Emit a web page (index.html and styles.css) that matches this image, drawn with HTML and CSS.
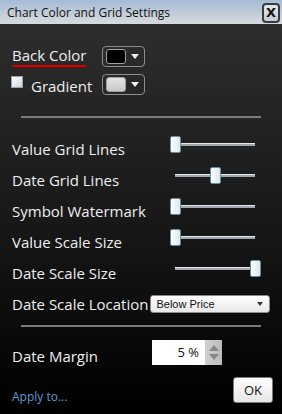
FILE: index.html
```html
<!DOCTYPE html>
<html lang="en">
<head>
  <meta charset="UTF-8">
  <meta name="viewport" content="width=device-width, initial-scale=1.0">
  <title>Chart Color and Grid Settings</title>
  <link rel="stylesheet" href="styles.css">
</head>
<body>

<div class="dialog">
  <div class="titlebar">
    <span class="title">Chart Color and Grid Settings</span>
    <button class="close-btn">X</button>
  </div>

  <div class="content">
    <div class="color-row">
      <span class="label"><span class="marked">Back Color</span></span>
      <div class="swatch-btn">
        <span class="swatch swatch-black"></span>
        <span class="caret"></span>
      </div>
    </div>
    <div class="color-row">
      <label class="label check-label"><span class="checkbox"></span>Gradient</label>
      <div class="swatch-btn">
        <span class="swatch swatch-grey"></span>
        <span class="caret"></span>
      </div>
    </div>

    <div class="divider divider-top"></div>

    <div class="setting-row">
      <span class="label">Value Grid Lines</span>
      <div class="slider"><div class="track"></div><div class="thumb" style="left: 0px;"></div></div>
    </div>
    <div class="setting-row">
      <span class="label">Date Grid Lines</span>
      <div class="slider"><div class="track"></div><div class="thumb" style="left: 40px;"></div></div>
    </div>
    <div class="setting-row">
      <span class="label">Symbol Watermark</span>
      <div class="slider"><div class="track"></div><div class="thumb" style="left: 0px;"></div></div>
    </div>
    <div class="setting-row">
      <span class="label">Value Scale Size</span>
      <div class="slider"><div class="track"></div><div class="thumb" style="left: 0px;"></div></div>
    </div>
    <div class="setting-row">
      <span class="label">Date Scale Size</span>
      <div class="slider"><div class="track"></div><div class="thumb" style="left: 80px;"></div></div>
    </div>
    <div class="setting-row">
      <span class="label label-auto">Date Scale Location</span>
      <div class="select">
        <span>Below Price</span>
        <span class="select-caret"></span>
      </div>
    </div>

    <div class="divider divider-bottom"></div>

    <div class="margin-row">
      <span class="label">Date Margin</span>
      <div class="spin">
        <span class="spin-value">5 %</span>
        <span class="spin-buttons">
          <span class="spin-up"></span>
          <span class="spin-down"></span>
        </span>
      </div>
    </div>

    <div class="footer">
      <a class="apply-link" href="#">Apply to...</a>
      <button class="ok-btn">OK</button>
    </div>
  </div>
</div>

</body>
</html>
```

FILE: styles.css
```css
/* Global Styles */
body {
  margin: 0;
  font-family: 'Open Sans', 'Liberation Sans', sans-serif;
  background-color: #ffffff;
}

.dialog {
  width: 282px;
  height: 414px;
  display: flex;
  flex-direction: column;
  background: linear-gradient(to bottom, #303030 0%, #1c1c1c 45%, #000000 100%);
  color: #ececec;
  overflow: hidden;
}

/* Title bar */
.titlebar {
  height: 24px;
  flex-shrink: 0;
  display: flex;
  align-items: center;
  justify-content: space-between;
  padding: 0 2px 0 7px;
  background: linear-gradient(to bottom, #a4bbd6 0%, #c4ced9 60%, #d6dbe1 100%);
}

.title {
  font-family: 'Open Sans', sans-serif;
  font-size: 12px;
  color: #111;
}

.close-btn {
  width: 18px;
  height: 20px;
  margin-top: 1px;
  padding: 0;
  border: 2px solid #3a3a3a;
  border-radius: 4px;
  background: linear-gradient(to bottom, #e4e8ec, #c6ccd3);
  font-family: 'DejaVu Sans', sans-serif;
  font-weight: bold;
  font-size: 13px;
  line-height: 15px;
  color: #111;
}

.content {
  flex: 1;
  display: flex;
  flex-direction: column;
  padding: 21px 0 0 12px;
}

.label {
  font-size: 15px;
  color: #eeeeee;
}

/* Colour rows */
.color-row {
  height: 22px;
  display: flex;
  align-items: center;
  margin-bottom: 6px;
}

.color-row .label {
  width: 90px;
}

.marked {
  display: inline-block;
  padding-bottom: 1px;
  border-bottom: 2px solid #d40000;
  box-shadow: 0 2px 2px -1px rgba(120, 0, 0, 0.6);
  line-height: 17px;
}

.check-label {
  display: flex;
  align-items: center;
  margin-top: 3px;
}

.checkbox {
  width: 10px;
  height: 10px;
  margin: -7px 8px 0 -1px;
  border: 1px solid #9aa0a8;
  background: linear-gradient(135deg, #ffffff, #cfd6de);
}

.swatch-btn {
  width: 38px;
  height: 19px;
  display: flex;
  align-items: center;
  gap: 5px;
  padding-left: 3px;
  border: 1.5px solid #8c8c8c;
  border-radius: 4px;
}

.swatch {
  width: 18px;
  height: 13px;
  border: 1px solid #a0a0a0;
  border-radius: 3px;
}

.swatch-black {
  background-color: #000;
}

.swatch-grey {
  background: linear-gradient(to bottom, #e2e2e2, #c8c8c8);
}

.caret {
  width: 0;
  height: 0;
  border-left: 4px solid transparent;
  border-right: 4px solid transparent;
  border-top: 5px solid #f2f2f2;
}

/* Dividers */
.divider {
  width: 240px;
  height: 2px;
  margin-left: 9px;
  background-color: #7a7a7a;
}

.divider-top {
  margin-top: 15px;
  margin-bottom: 15px;
}

.divider-bottom {
  margin-top: 6px;
  margin-bottom: 13px;
}

/* Slider rows */
.setting-row {
  height: 31px;
  display: flex;
  align-items: center;
}

.setting-row .label {
  width: 140px;
  flex-shrink: 0;
  white-space: nowrap;
}

.setting-row .label-auto {
  width: auto;
  margin-right: 2px;
}

.slider {
  position: relative;
  width: 90px;
  height: 17px;
  margin: 0 0 8px 18px;
}

.track {
  height: 2px;
  margin: 7px 5px 0 5px;
  border-top: 1px solid #e6e9ec;
  background-color: #9ea6ae;
}

.thumb {
  position: absolute;
  top: 0;
  width: 9px;
  height: 15px;
  border: 1px solid #5f93a3;
  border-radius: 2px;
  background: linear-gradient(to right, #ffffff, #dfe6ec);
}

/* Drop-down */
.select {
  width: 107px;
  height: 16px;
  display: flex;
  align-items: center;
  justify-content: space-between;
  padding: 0 6px 0 5px;
  border: 1px solid #8a8a8a;
  border-radius: 3px;
  background: linear-gradient(to bottom, #ffffff, #e8e8e8);
  font-family: 'Liberation Sans', sans-serif;
  font-size: 11px;
  color: #111;
}

.select-caret {
  width: 0;
  height: 0;
  border-left: 3px solid transparent;
  border-right: 3px solid transparent;
  border-top: 4px solid #333;
}

/* Date margin */
.margin-row {
  height: 25px;
  display: flex;
  align-items: flex-end;
}

.margin-row .label {
  width: 140px;
  margin-bottom: -1px;
}

.spin {
  display: flex;
  height: 25px;
}

.spin-value {
  width: 47px;
  padding-right: 6px;
  background-color: #fff;
  color: #111;
  font-size: 13px;
  line-height: 25px;
  text-align: right;
}

.spin-buttons {
  width: 17px;
  display: flex;
  flex-direction: column;
  align-items: center;
  justify-content: space-around;
  padding: 4px 0;
  background: linear-gradient(to right, #d0d0d0, #bcbcbc);
  box-sizing: border-box;
}

.spin-up,
.spin-down {
  width: 0;
  height: 0;
  border-left: 5px solid transparent;
  border-right: 5px solid transparent;
}

.spin-up {
  border-bottom: 6px solid #888;
}

.spin-down {
  border-top: 6px solid #888;
}

/* Footer */
.footer {
  display: flex;
  justify-content: space-between;
  align-items: flex-end;
  margin-top: 12px;
  padding-right: 9px;
}

.apply-link {
  font-size: 12px;
  color: #5a9ad4;
  text-decoration: none;
  margin-bottom: -2px;
}

.ok-btn {
  width: 40px;
  height: 26px;
  padding: 0;
  border: 1px solid #7c7c7c;
  border-radius: 3px;
  background: linear-gradient(to bottom, #ffffff, #e6e6e6);
  font-family: 'Open Sans', sans-serif;
  font-size: 13px;
  color: #111;
  cursor: pointer;
}
```
